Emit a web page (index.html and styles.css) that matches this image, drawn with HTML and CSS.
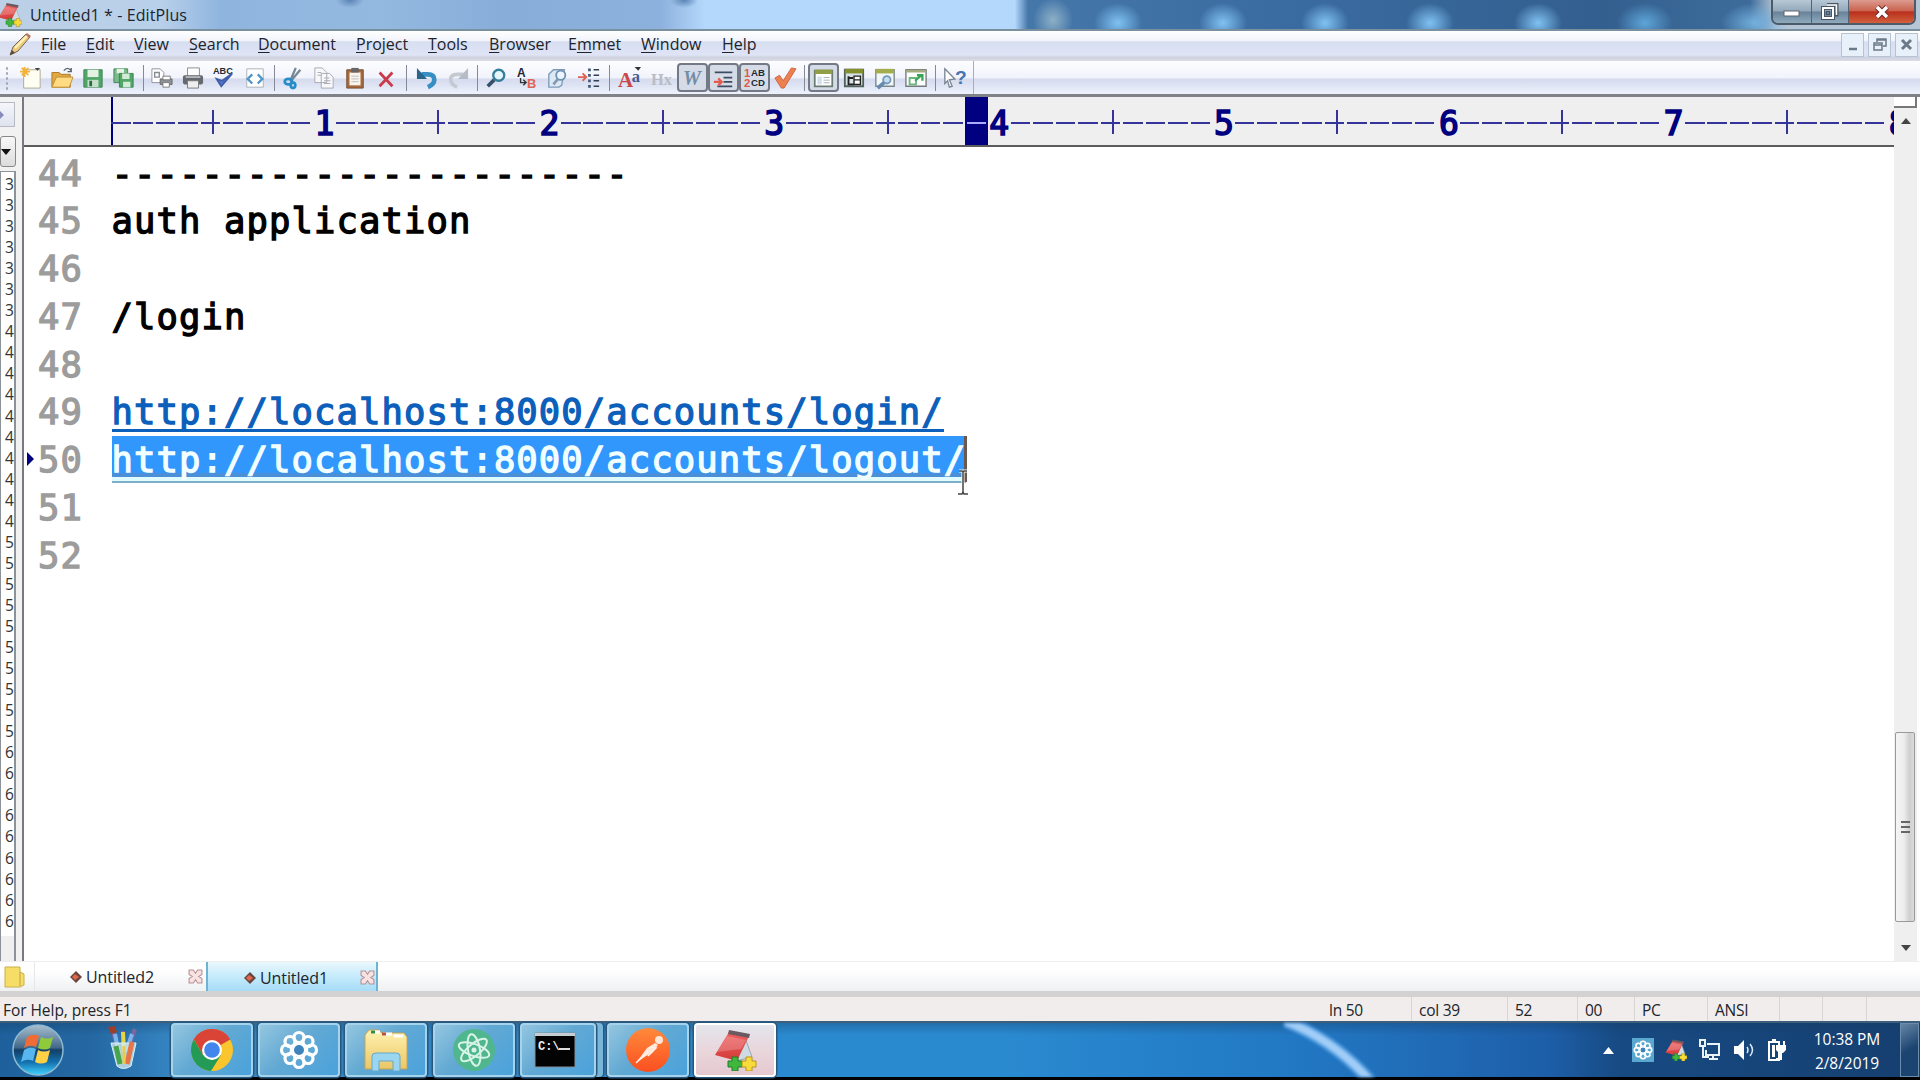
FILE: index.html
```html
<!DOCTYPE html>
<html lang="en">
<head>
<meta charset="utf-8">
<title>Untitled1 * - EditPlus</title>
<link rel="stylesheet" href="styles.css">
</head>
<body>
<svg class="defs" width="0" height="0" aria-hidden="true">
  <defs>
    <linearGradient id="red" x1="0" y1="0" x2="0" y2="1"><stop offset="0" stop-color="#f0605f"/><stop offset="1" stop-color="#d33a3a"/></linearGradient>
    <linearGradient id="orb" x1="0" y1="0" x2="0" y2="1"><stop offset="0" stop-color="#a9c0d0"/><stop offset=".45" stop-color="#42698a"/><stop offset=".5" stop-color="#123f66"/><stop offset=".75" stop-color="#1573b0"/><stop offset="1" stop-color="#40d4ff"/></linearGradient>
    <linearGradient id="orange" x1="0" y1="0" x2="0" y2="1"><stop offset="0" stop-color="#ff8a3c"/><stop offset="1" stop-color="#fb4f20"/></linearGradient>
    <linearGradient id="fold" x1="0" y1="0" x2="0" y2="1"><stop offset="0" stop-color="#fff2b0"/><stop offset="1" stop-color="#eac766"/></linearGradient>
    <symbol id="editplus" viewBox="0 0 42 42">
      <path d="M30 6l8 22-16 4z" fill="#cfdbe3" stroke="#9aa9b3"/>
      <path d="M15 3l20 4-12 25L1 26z" fill="url(#red)"/><path d="M15 1l21 4-1 4-21-4z" fill="#6b5a60"/>
      <path d="M13 7l19 4-5 9-24 3z" fill="#fff" opacity=".2"/>
      <path d="M18 28h6v4h4v6h-4v4h-6v-4h-4v-6h4z" fill="#41b63d" stroke="#1f7e27"/>
      <path d="M32 28h6v4h4v6h-4v4h-6v-4h-4v-6h4z" fill="#f9dc3c" stroke="#b89416"/>
    </symbol>
    <symbol id="flower" viewBox="0 0 40 40">
      <g fill="none" stroke="#fff" stroke-width="3.2"><circle cx="20" cy="7.5" r="5"/><circle cx="29" cy="11.500" r="5"/><circle cx="32.500" cy="20" r="5"/><circle cx="29" cy="28.500" r="5"/><circle cx="20" cy="32.500" r="5"/><circle cx="11" cy="28.500" r="5"/><circle cx="7.500" cy="20" r="5"/><circle cx="11" cy="11.500" r="5"/></g>
      <circle cx="20" cy="20" r="6" fill="#3c84bb" stroke="#fff" stroke-width="2"/>
    </symbol>
    <symbol id="page" viewBox="0 0 24 24"><path d="M3 2h18v20H3z" fill="#fff" stroke="#a9aeb5"/></symbol>
    <symbol id="tabclose" viewBox="0 0 14 14"><path d="M1 1h4l2 3 2-3h4v4l-3 2 3 2v4H9l-2-3-2 3H1V9l3-2-3-2z" fill="#f8e3e3" stroke="#b88f94"/></symbol>
  </defs>
</svg>
<div class="app">
  <header class="titlebar">
    <svg class="app-icon" width="22" height="25"><use href="#editplus" width="24" height="25" x="-2"/></svg>
    <span class="title">Untitled1 * - EditPlus</span>
    <div class="winbtns">
      <span class="wb min"><svg width="18" height="14"><rect x="1" y="4" width="15" height="5" fill="#fff" stroke="#5b6672"/></svg></span>
      <span class="wb max"><svg width="18" height="18" fill="none"><path d="M6 1h10v11h-2" stroke="#4a5663" stroke-width="3"/><path d="M6 2h9.500v10" stroke="#fff" stroke-width="1.500"/><rect x="2" y="5" width="10" height="10" stroke="#4a5663" stroke-width="4"/><rect x="2" y="5" width="10" height="10" stroke="#fff" stroke-width="2"/><rect x="5.500" y="8.500" width="3" height="3" stroke="#4a5663"/></svg></span>
      <span class="wb close"><svg width="18" height="16"><path d="M4 3l10 10M14 3L4 13" stroke="#6d2a24" stroke-width="5.500"/><path d="M4 3l10 10M14 3L4 13" stroke="#fff" stroke-width="3.500"/></svg></span>
    </div>
  </header>

  <nav class="menubar">
    <svg class="pencil" width="26" height="26"><path d="M3 23l3-8L19 2l4 3L11 19z" fill="#edca7e" stroke="#776653"/><path d="M18 3l2-2 4 3-2 2z" fill="#b8746c"/><path d="M3 23l2-5 3 3z" fill="#594b3b"/><path d="M8 16L20 4" stroke="#fff3bf" stroke-width="2"/></svg>
    <div class="menus">
      <span><u>F</u>ile</span><span><u>E</u>dit</span><span><u>V</u>iew</span><span><u>S</u>earch</span><span><u>D</u>ocument</span><span><u>P</u>roject</span><span><u>T</u>ools</span><span><u>B</u>rowser</span><span>E<u>m</u>met</span><span><u>W</u>indow</span><span><u>H</u>elp</span>
    </div>
    <div class="mdi">
      <span><svg width="16" height="16"><path d="M4 12h8" stroke="#6a7a88" stroke-width="2.500"/></svg></span>
      <span><svg width="16" height="16" fill="none" stroke="#6a7a88" stroke-width="1.500"><path d="M5 5V2h9v7h-3M5 3h9"/><rect x="2" y="6" width="8" height="7"/><path d="M2 8h8"/></svg></span>
      <span><svg width="16" height="16"><path d="M3 3l9 9M12 3l-9 9" stroke="#6a7a88" stroke-width="3"/></svg></span>
    </div>
  </nav>

  <div class="toolbar">
    <div class="tools">
      <span class="grip"></span>
      <i><svg viewBox="0 0 24 24"><path d="M4 3h18v20H4z" fill="#fffef2" stroke="#aaa78f"/><path d="M5 0v11M0 5h11M2 1l7 8M9 1L2 9" stroke="#f2b13a" stroke-width="2"/><path d="M16 1h6l-3 3z" fill="#444"/></svg></i>
      <i><svg viewBox="0 0 24 24"><path d="M1 6h8l2 2h10v14H1z" fill="#e0a83f" stroke="#a8772a"/><path d="M6 11h18l-4 11H1z" fill="#ffdc84" stroke="#bd8d36"/><path d="M14 4q4-5 8 0m0-3v4h-4" fill="none" stroke="#55616d" stroke-width="1.500"/></svg></i>
      <i><svg viewBox="0 0 24 24"><path d="M2 3h20v19H2z" fill="#4fa667" stroke="#3b8453"/><path d="M6 3h12v8H6z" fill="#e5f2e3"/><path d="M6 14h12v8H6z" fill="#c5dfcb"/><path d="M8 15h3v6H8z" fill="#276d3d"/></svg></i>
      <i><svg viewBox="0 0 24 24"><path d="M1 2h15v15H1z" fill="#7bbb87" stroke="#3b8453"/><path d="M4 2h8v5H4z" fill="#e5f2e3"/><path d="M7 7h15v15H7z" fill="#4fa667" stroke="#3b8453"/><path d="M10 7h8v6h-8zM11 16h8v6h-8z" fill="#d6ead8"/></svg></i>
      <b class="sep"></b>
      <i><svg viewBox="0 0 24 24"><path d="M1 2h9l4 4v11H1z" fill="#fff" stroke="#8c9198"/><path d="M4 6h5v5H4z" fill="none" stroke="#858b93" stroke-width="1.500"/><path d="M10 13h13v6H10z" fill="#8d9198" stroke="#666"/><path d="M13 10h8v4h-8zM13 17h7v5h-7z" fill="#fff" stroke="#777"/></svg></i>
      <i><svg viewBox="0 0 24 24"><path d="M6 1h13v9H6z" fill="#fff" stroke="#888"/><rect x="1" y="9" width="22" height="10" rx="2" fill="#666a70"/><path d="M4 11h16" stroke="#b4b8bd" stroke-width="2"/><path d="M6 15h12v8H6z" fill="#eee" stroke="#777"/></svg></i>
      <i><svg viewBox="0 0 24 24"><text x="0" y="8" class="glyph" font-size="10" fill="#262b34">ABC</text><path d="M4 13l5 8L21 7l-11 8z" fill="#5876c6" stroke="#3e5ea9" stroke-width="2"/></svg></i>
      <i><svg viewBox="0 0 24 24"><use href="#page" width="24" height="24"/><path d="M9 8l-5 5 5 5M15 8l5 5-5 5" fill="none" stroke="#4e96c9" stroke-width="2.500"/></svg></i>
      <b class="sep"></b>
      <i><svg viewBox="0 0 24 24"><path d="M15 1L9 15M20 3L9 16" stroke="#768895" stroke-width="2.500"/><g fill="none" stroke="#278dc9" stroke-width="3"><ellipse cx="7" cy="16" rx="4" ry="3"/><ellipse cx="12" cy="20" rx="2.500" ry="3"/></g></svg></i>
      <i><svg viewBox="0 0 24 24" fill="#f8f8fa" stroke="#a3a7ae"><path d="M2 1h8l5 5v11H2zM9 7h9l4 4v12H9z"/><path d="M5 6h4M5 9h4M12 12h6M12 15h7M12 18h7" /></svg></i>
      <i><svg viewBox="0 0 24 24"><path d="M3 3h18v20H3z" fill="#a86a3c" stroke="#6e4a30"/><path d="M6 6h12v14H6z" fill="#f9f4ed"/><path d="M8 1h8v5H8z" fill="#666"/><path d="M8 10h8M8 13h8M8 16h8" stroke="#bbb"/></svg></i>
      <i><svg viewBox="0 0 24 24"><path d="M5 6l14 15M19 6L5 21" stroke="#c93a4b" stroke-width="3"/></svg></i>
      <b class="sep wide"></b>
      <i><svg viewBox="0 0 24 24"><path d="M6 8h7q7 0 7 6 0 5-7 8" fill="none" stroke="#378ec2" stroke-width="5"/><path d="M1 1v12h11z" fill="#27658f"/></svg></i>
      <i><svg viewBox="0 0 24 24"><path d="M18 8h-7q-7 0-7 6 0 5 7 8" fill="none" stroke="#c5cad2" stroke-width="4"/><path d="M23 1v12H12z" fill="#b6bcc5"/></svg></i>
      <b class="sep"></b>
      <i><svg viewBox="0 0 24 24"><circle cx="15" cy="9" r="6" fill="#e5f6fb" stroke="#347e9b" stroke-width="2.500"/><path d="M10 14l-7 7" stroke="#35516c" stroke-width="4"/></svg></i>
      <i><svg viewBox="0 0 24 24"><text x="1" y="11" class="glyph" font-size="13" fill="#202632">A</text><text x="12" y="23" class="glyph" font-size="14" fill="#e06455">B</text><path d="M5 12v5h5m-2-3l3 3-3 3" fill="none" stroke="#333" stroke-width="1.500"/></svg></i>
      <i><svg viewBox="0 0 24 24"><path d="M2 8l5-5h12l-3 17-3 2H2z" fill="#dce8f4" stroke="#7d9cba" stroke-width="1.500"/><circle cx="15" cy="9" r="5" fill="#edf6ff" stroke="#6f91b2" stroke-width="2"/><path d="M12 13l-5 6" stroke="#829bb3" stroke-width="3"/></svg></i>
      <i><svg viewBox="0 0 24 24"><path d="M0 11h8M5 7l4 4-4 4" stroke="#df6154" stroke-width="2" fill="none"/><path d="M17 3h6M17 9h6M17 15h6M17 21h6" stroke="#2e4055" stroke-width="1.500"/><path d="M11 3h3M11 9h3M11 15h3M11 21h3" stroke="#465b74" stroke-width="3"/></svg></i>
      <b class="sep wide"></b>
      <i><svg viewBox="0 0 24 24"><text x="-1" y="22" class="serif" font-size="23" fill="#c9494a">A</text><text x="14" y="16" class="serif" font-size="18" fill="#445c94">a</text><path d="M17 0h7l-3 4z" fill="#333"/></svg></i>
      <i><svg viewBox="0 0 24 24"><text x="1" y="20" class="serif dim" font-size="18">Hx</text></svg></i>
      <i class="on"><svg viewBox="0 0 24 24"><text x="1" y="21" class="serif ital" font-size="23">W</text></svg></i>
      <i class="on"><svg viewBox="0 0 24 24"><path d="M2 6h20M12 12h10M12 17h10M5 22h17" stroke="#3c4d63" stroke-width="2"/><path d="M1 17h7M6 13l4 4-4 4" fill="none" stroke="#e45c4e" stroke-width="2.500"/></svg></i>
      <i class="on"><svg viewBox="0 0 24 24"><text x="0" y="11" class="glyph" font-size="13" fill="#dd5a4a">1</text><text x="0" y="23" class="glyph" font-size="13" fill="#dd5a4a">2</text><text x="8" y="10" class="glyph up" font-size="11" fill="#1d2838">AB</text><text x="8" y="22" class="glyph up" font-size="11" fill="#1d2838">CD</text></svg></i>
      <i><svg viewBox="0 0 24 24"><path d="M1 12l5-3 4 6L19 1l5 1-13 21H8z" fill="#ed8050" stroke="#cf6339"/></svg></i>
      <b class="sep"></b>
      <i class="on"><svg viewBox="0 0 24 24"><path d="M2 4h20v18H2z" fill="#fff" stroke="#6d7c72" stroke-width="2"/><path d="M2 3h20v5H2z" fill="#909e45"/><path d="M5 11h5v9H5z" fill="#cfe0ef"/><path d="M12 12h7M12 15h7M12 18h7" stroke="#9aa"/></svg></i>
      <i><svg viewBox="0 0 24 24"><path d="M2 3h20v18H2z" fill="#d5e1e6" stroke="#52605c" stroke-width="2"/><path d="M2 2h20v5H2z" fill="#848f30"/><path d="M6 10v9h6M6 12h5" stroke="#222" fill="none" stroke-width="2"/><path d="M12 10h7v9h-7zM12 14h7" fill="#fff" stroke="#222" stroke-width="1.500"/></svg></i>
      <i><svg viewBox="0 0 24 24"><path d="M2 3h20v18H2z" fill="#f1f6f8" stroke="#7a888b" stroke-width="1.500"/><path d="M2 2h20v5H2z" fill="#a4ad4d"/><circle cx="14" cy="14" r="4" fill="#c4ddf1" stroke="#7499bb" stroke-width="2"/><path d="M11 17l-7 6" stroke="#6589b0" stroke-width="4"/></svg></i>
      <i><svg viewBox="0 0 24 24"><path d="M1 3h22v18H1z" fill="#fff" stroke="#727b7c" stroke-width="1.500"/><path d="M1 3h22v3H1z" fill="#a4ad80"/><path d="M5 12h7v7H5z" fill="none" stroke="#6ab77d" stroke-width="2"/><path d="M11 15l7-6m-5 0h6v6" fill="none" stroke="#39a457" stroke-width="2.500"/></svg></i>
      <b class="sep"></b>
      <i><svg viewBox="0 0 24 24"><path d="M2 2l11 11-6 1 3 7-3 1-2-7-3 3z" fill="#fff" stroke="#7b8795" stroke-width="1.500"/><text x="13" y="19" class="glyph" font-size="21" fill="#4774b0">?</text></svg></i>
      <b class="tail"></b>
    </div>
  </div>

  <main class="workspace">
    <aside class="side">
      <div class="collapse"><svg width="8" height="12"><path d="M0 2l4 4-4 4z" fill="#858bbf"/></svg></div>
      <div class="combo"><svg width="12" height="8"><path d="M0 1h10L5 7z" fill="#111"/></svg></div>
      <div class="list">
        <p>3</p><p>3</p><p>3</p><p>3</p><p>3</p><p>3</p><p>3</p>
        <p>4</p><p>4</p><p>4</p><p>4</p><p>4</p><p>4</p><p>4</p><p>4</p><p>4</p><p>4</p>
        <p>5</p><p>5</p><p>5</p><p>5</p><p>5</p><p>5</p><p>5</p><p>5</p><p>5</p><p>5</p>
        <p>6</p><p>6</p><p>6</p><p>6</p><p>6</p><p>6</p><p>6</p><p>6</p><p>6</p>
        <div class="corner"></div>
      </div>
    </aside>
    <section class="editor">
      <div class="ruler">
        <div class="origin"></div>
        <div class="decades"><span>1</span><span>2</span><span>3</span><span>4</span><span>5</span><span>6</span><span>7</span><span>8</span></div>
        <div class="colmark"></div>
      </div>
      <div class="lines">
        <div class="line"><em>44</em><code>-----------------------</code></div>
        <div class="line"><em>45</em><code>auth application</code></div>
        <div class="line"><em>46</em><code></code></div>
        <div class="line"><em>47</em><code>/login</code></div>
        <div class="line"><em>48</em><code></code></div>
        <div class="line"><em>49</em><code class="link">http://localhost:8000/accounts/login/</code></div>
        <div class="line current"><em>50</em><code class="link selected">http://localhost:8000/accounts/logout/</code><b class="caret"></b>
          <svg class="ibeam" width="12" height="27"><path d="M2 2h3l1 1 1-1h3M6 3v20M1 25h4l1-2 1 2h4" fill="none" stroke="#fff" stroke-width="3"/><path d="M2 2h3l1 1 1-1h3M6 3v20M1 25h4l1-2 1 2h4" fill="none" stroke="#444" stroke-width="1.500"/></svg></div>
        <div class="line"><em>51</em><code></code></div>
        <div class="line"><em>52</em><code></code></div>
      </div>
    </section>
    <div class="scroll">
      <div class="split"></div>
      <div class="arrow up"><svg width="10" height="6"><path d="M0 6l5-6 5 6z" fill="#444"/></svg></div>
      <div class="thumb"><svg width="9" height="12"><path d="M0 1h9M0 6h9M0 11h9" stroke="#666" stroke-width="2"/></svg></div>
      <div class="arrow"><svg width="10" height="6"><path d="M0 0h10L5 6z" fill="#444"/></svg></div>
    </div>
  </main>

  <div class="tabs">
    <div class="dirtab"><svg width="22" height="24"><path d="M1 2h15v5l4 2v11l-4 2H1z" fill="#f5dd68" stroke="#ccb04a"/><path d="M16 7v14" stroke="#c2a23d"/></svg></div>
    <div class="tab first"><svg width="12" height="12"><path d="M6 0l6 6-6 6-6-6z" fill="#6b4640"/><path d="M5 3l4 3-4 3-3-3z" fill="#e0694b"/></svg><span>Untitled2</span><svg class="x" width="15" height="15"><use href="#tabclose" width="15" height="15"/></svg></div>
    <div class="tab active"><svg width="12" height="12"><path d="M6 0l6 6-6 6-6-6z" fill="#6b4640"/><path d="M5 3l4 3-4 3-3-3z" fill="#e0694b"/></svg><span>Untitled1</span><svg class="x" width="15" height="15"><use href="#tabclose" width="15" height="15"/></svg></div>
  </div>

  <footer class="status">
    <span>For Help, press F1</span><span>ln 50</span><span>col 39</span><span>52</span><span>00</span><span>PC</span><span>ANSI</span><span></span><span></span><span></span>
  </footer>

  <div class="taskbar">
    <svg class="streak" width="120" height="54"><path d="M-4 -4Q50 16 88 60" fill="none" stroke="#4f9be0" stroke-width="13"/><path d="M-4 -4Q50 16 88 60" fill="none" stroke="#a1cdf7" stroke-width="8"/></svg>
    <div class="start"><svg width="54" height="54" viewBox="0 0 54 54"><circle cx="27" cy="27" r="25" fill="url(#orb)" stroke="#8eb9d2" stroke-width="1.500"/><path d="M16 14q6-4 12-1l-3 11q-6-3-12 1z" fill="#ef6c36"/><path d="M30 14q6 3 12 0l-3 11q-5 3-12 0z" fill="#8fca3b"/><path d="M13 27q6-4 12-1l-3 12q-6-3-12 1z" fill="#58b6ee"/><path d="M27 27q6 3 12 0l-3 12q-6 3-12 0z" fill="#fdd045"/></svg></div>
    <div class="paint"><svg width="32" height="44" viewBox="0 0 32 44"><path d="M5 2l5 18M16 5v18M28 3l-8 22" stroke="#7b66a0" stroke-width="4"/><path d="M8 8l4 20M25 8l-6 18" stroke="#7eb2ec" stroke-width="4"/><path d="M16 6l1 20" stroke="#e7d548" stroke-width="4"/><path d="M1 1l7-1 2 6-6 2z" fill="#9d3e2b"/><path d="M4 17h25l-5 23q-8 5-14 0z" fill="#d8ecef" fill-opacity=".75" stroke="#d6f2fa"/><path d="M9 20l4 18" stroke="#47a448" stroke-width="5"/><path d="M25 16l-5 22" stroke="#e67548" stroke-width="5"/><path d="M17 20v18" stroke="#e8cd48" stroke-width="3"/></svg></div>
    <div class="task"><svg width="44" height="44" viewBox="0 0 44 44"><circle cx="22" cy="22" r="21" fill="#fbc52d"/><path d="M22 22L3.800 11.500A21 21 0 0 1 40.200 11.500z" fill="#da4437"/><path d="M22 11.500h18.200A21 21 0 0 0 3.800 11.500L13 27z" fill="#da4437"/><path d="M3.800 11.500A21 21 0 0 0 21 43l10-16-9 5-9-5z" fill="#239b57"/><circle cx="22" cy="22" r="10" fill="#fff"/><circle cx="22" cy="22" r="7.800" fill="#4285ed"/></svg></div>
    <div class="task"><svg width="40" height="40"><use href="#flower" width="40" height="40"/></svg></div>
    <div class="task"><svg width="46" height="44" viewBox="0 0 46 44"><path d="M2 7l4-5h9l4 3h22l3 4v32H2z" fill="url(#fold)" stroke="#c7a557"/><path d="M8 4h9M20 6h9M31 8h9" stroke="#fff" stroke-width="3"/><path d="M8 4h4" stroke="#338c45" stroke-width="3"/><path d="M19 6h4" stroke="#b55342" stroke-width="3"/><path d="M9 43V28q0-3 4-3h20q4 0 4 3v15h-7V33H16v10z" fill="#9bd6f1" stroke="#65a9cb"/></svg></div>
    <div class="task"><svg width="44" height="44" viewBox="0 0 44 44"><circle cx="22" cy="22" r="21" fill="#50b68d"/><g fill="none" stroke="#d8f4e7" stroke-width="2"><ellipse cx="22" cy="22" rx="16" ry="6" transform="rotate(20 22 22)"/><ellipse cx="22" cy="22" rx="16" ry="6" transform="rotate(80 22 22)"/><ellipse cx="22" cy="22" rx="16" ry="6" transform="rotate(140 22 22)"/></g><circle cx="22" cy="22" r="2.500" fill="#d8f4e7"/></svg></div>
    <div class="task cmd"><svg width="42" height="36"><path d="M1 1h40v34H1z" fill="#030303" stroke="#81909b"/><path d="M1 1h40v3H1z" fill="#c5cdd2"/><text x="4" y="18" class="term" font-size="12">C:\</text><path d="M25 17h11" stroke="#ddd" stroke-width="2"/></svg></div>
    <div class="task"><svg width="46" height="46" viewBox="0 0 46 46"><circle cx="23" cy="23" r="22" fill="url(#orange)"/><circle cx="34" cy="13" r="4" fill="#ffe6d5"/><path d="M11 36l11-15 8-5 3 2-6 8-6 3z" fill="#ffe6d5"/><path d="M11 36l12-12M25 20l6 1-8 8" fill="none" stroke="#fff1e8" stroke-width="1.500"/></svg></div>
    <div class="task lit"><svg width="44" height="42"><use href="#editplus" width="44" height="42"/></svg></div>
    <div class="tray">
      <i class="tri"><svg width="11" height="7"><path d="M0 7l5.500-7L11 7z" fill="#fff"/></svg></i>
      <i><svg width="22" height="24"><rect width="22" height="24" fill="#5aa7cf"/><use href="#flower" x="1" y="2" width="20" height="20"/></svg></i>
      <i><svg width="22" height="22"><use href="#editplus" width="22" height="22"/></svg></i>
      <i><svg width="22" height="22" fill="none" stroke="#eaf2f7" stroke-width="2"><path d="M8 5h12v11H7v-5M10 20h9M14 16v4"/><path d="M1 1h5v6H1zM4 7v11h6"/></svg></i>
      <i><svg width="22" height="22"><path d="M1 7h4l6-6v20l-6-6H1z" fill="#fff"/><path d="M14 8q2 3 0 6M17 5q5 6 0 12" fill="none" stroke="#dbe9f2" stroke-width="1.500"/></svg></i>
      <i><svg width="22" height="22"><path d="M3 3h10v18H3z" fill="none" stroke="#fff" stroke-width="2"/><path d="M6 0h4v3H6zM6 6h3v12H6zM10 6h10v5l-3 3h-4l-3-3zM12 2h2v4h-2zM17 2h2v4h-2z" fill="#fff"/><path d="M15 13v7h-5" fill="none" stroke="#fff" stroke-width="2"/></svg></i>
    </div>
    <div class="clock"><span>10:38 PM</span><span>2/8/2019</span></div>
    <div class="desk"></div>
  </div>
</div>
</body>
</html>
```
FILE: styles.css
```css
* { box-sizing: border-box; }
body { margin: 0; background: #000; font-family: "Open Sans", "Noto Sans", sans-serif; font-size: 16px; color: #20242c; overflow: hidden; }
p { margin: 0; }
svg { display: block; flex: none; }
.defs { position: absolute; }
.app { width: 1920px; height: 1080px; display: flex; flex-direction: column; }
.app > * { flex: none; }

.titlebar {
  height: 31px; display: flex; align-items: flex-start; border-bottom: 2px solid #7b909f;
  background:
    radial-gradient(ellipse 24px 20px at 1118px 23px, #80c2f2, transparent),
    radial-gradient(ellipse 24px 20px at 1223px 23px, #80c2f2, transparent),
    radial-gradient(ellipse 24px 20px at 1325px 23px, #80c2f2, transparent),
    radial-gradient(ellipse 24px 20px at 1430px 23px, #80c2f2, transparent),
    radial-gradient(ellipse 24px 20px at 1538px 23px, #80c2f2, transparent),
    radial-gradient(ellipse 28px 20px at 1645px 23px, #5ea5d8, transparent),
    radial-gradient(ellipse 34px 20px at 1755px 23px, #74b0dd, transparent),
    radial-gradient(ellipse 20px 22px at 1053px 20px, #8eb0c8, transparent),
    radial-gradient(ellipse 14px 8px at 350px 0, #5b84b5, transparent),
    radial-gradient(ellipse 14px 8px at 684px 0, #5b84b5, transparent),
    linear-gradient(90deg, #bcd0e6 0, #b9d0ea 160px, #8fb5df 220px, #94b9e0 380px, #88add9 500px, #8cb1dc 660px, #b4d7fc 705px, #b4d7fc 1015px, #4577a9 1028px, #3a6ba0 1300px, #335f8f 1600px, #3d6c9a 1750px, #b5c6d6 1775px);
}
.app-icon { margin-top: 2px; }
.title { margin-left: 8px; line-height: 31px; width: 170px; white-space: nowrap; letter-spacing: .1px; }
.winbtns { margin: 0 4px 0 auto; width: 145px; height: 25px; display: flex; border: 2px solid #4d5b69; border-top: 0; border-radius: 0 0 7px 7px; overflow: hidden; }
.wb { display: flex; align-items: center; justify-content: center; background: linear-gradient(#b7c8d6, #93a8ba 48%, #68829a 52%, #8faabd); border-right: 1px solid #526372; }
.min { width: 39px; padding-top: 4px; } .max { width: 37px; }
.close { flex: 1; border: 0; background: linear-gradient(#dc9b8f, #cb6450 46%, #b92f1c 52%, #d2603d); }

.menubar { height: 30px; display: flex; align-items: center; background: linear-gradient(#fff, #f2f4fb 32%, #d7def0 36%, #dfe5f5 80%, #cfd2df 88%, #dadce6); }
.pencil { margin: 0 0 2px 7px; width: 26px; }
.menus { margin: 0 0 3px 8px; display: grid; grid-template-columns: 45px 48px 55px 69px 98px 72px 61px 79px 73px 81px 60px; line-height: 27px; }
.menus u { text-underline-offset: 2px; }
.mdi { margin: 0 2px 3px auto; display: flex; gap: 4px; }
.mdi span { width: 23px; height: 24px; display: flex; align-items: center; justify-content: center; background: #e8f1fa; border: 1px solid #b5c3d2; }

.toolbar { height: 36px; border-bottom: 3px solid #808287; background: linear-gradient(#fdfdff, #f2f4fc 50%, #d6dcee 55%, #dbe1f2 68%, #eef2fc); }
.tools { display: flex; align-items: center; height: 33px; }
.grip { width: 15.5px; height: 24px; background: radial-gradient(circle, #a5a8b5 1px, transparent 1.5px) 4px 0 / 6px 5px repeat-y; }
.tools i { width: 31px; height: 29px; display: flex; align-items: center; justify-content: center; }
.tools i svg { width: 22px; height: 22px; overflow: visible; }
.tools .on { background: #d5dce8; border: 2px solid #747a85; border-radius: 4px; }
.tools .on svg { width: 21px; height: 21px; }
.sep { width: 7px; height: 26px; background: linear-gradient(#868a96, #868a96) center / 1px 100% no-repeat; }
.sep.wide { width: 10px; }
.tail { width: 1px; height: 33px; background: #a9adba; margin-left: 3px; }
.glyph { font-family: "Liberation Sans", sans-serif; font-weight: 700; font-style: normal; }
.serif { font-family: "Liberation Serif", serif; font-weight: 700; font-style: normal; }
.dim { fill: #b9bcc4; } .serif.ital { font-style: italic; fill: #748da6; }
.term { font-family: "Liberation Mono", monospace; font-weight: 700; fill: #eee; }

.workspace { height: 864px; display: flex; background: #fff; }
.side { width: 24px; background: #f2f2f2; border-right: 2px solid #777b81; }
.collapse { margin-top: 5px; width: 15px; height: 25px; display: flex; align-items: center; background: linear-gradient(#f5f6fb, #dfe3ef); border: 1px solid #b8bbc4; border-left: 0; }
.combo { margin-top: 9px; width: 16px; height: 31px; display: flex; align-items: center; background: linear-gradient(#f8f8f8, #dcdcdc); border: 1px solid #888; border-radius: 3px; }
.list { margin-top: 4px; width: 16px; height: 790px; padding-top: 2px; border: 1px solid #8b9299; border-width: 1px 2px 1px 1px; background: #fff; }
.list p { height: 21.05px; line-height: 21px; font-size: 15.500px; padding-left: 4px; color: #333; }
.corner { width: 13px; height: 25px; margin-top: 4px; background: #efefef; }

.editor { width: 1870px; overflow: hidden; }
.ruler { height: 50px; background: #efefef; border-bottom: 2px solid #5c5c5c; display: flex; position: relative; overflow: hidden; }
.origin { width: 87px; flex: none; }
.decades { display: flex; border-left: 2px solid #000080; }
.decades span {
  flex: none; width: 224.9px; height: 48px; display: flex; justify-content: flex-end; font: 33px/53px "DejaVu Sans Mono", monospace; color: #000080; -webkit-text-stroke: 1.600px #000080;
  padding-right: 1.500px;
  background:
    linear-gradient(#34349a, #34349a) 101px 13px / 2px 24px no-repeat,
    linear-gradient(#efefef, #efefef) 202px 0 / 24px 48px no-repeat,
    repeating-linear-gradient(90deg, #34349a 0 19.500px, transparent 19.500px 22.490px) 0 25px / 100% 2px no-repeat;
}
.decades span:first-child { margin-left: -2px; }
.colmark { position: absolute; left: 941px; top: 0; width: 23px; height: 48px; background: linear-gradient(#aaaaff, #aaaaff) center 25px / 19px 2px no-repeat #000080; }

.lines { padding-top: 2.500px; }
.line { height: 47.8px; display: flex; position: relative; font: 35.5px/47.8px "DejaVu Sans Mono", monospace; white-space: pre; }
.line em { width: 87.5px; padding-left: 14px; font-style: normal; letter-spacing: 1.1px; color: #9c9c9c; -webkit-text-stroke: 1.3px #9c9c9c; }
.line code { font: inherit; letter-spacing: 1.12px; color: #000; -webkit-text-stroke: 1.3px currentColor; }
.line code.link { color: #0c5fba; height: 46px; background: linear-gradient(#0c5fba, #0c5fba) 0 41px / 100% 3px no-repeat; }
.line code.selected { color: #f2ffff; height: 47px; background: linear-gradient(#e0fbff, #e0fbff) 0 41px / 100% 4px no-repeat, linear-gradient(#3297fd 36px, #4b8fd6 38px 45px, #7dafc9 45px); }
.current::before { content: ""; position: absolute; left: 3px; top: 16px; border: 7px solid transparent; border-left-color: #000080; border-right: 0; }
.caret { width: 3px; height: 46px; background: #69594f; margin-left: -2px; }
.ibeam { position: absolute; left: 933px; top: 33px; }

.scroll { width: 26px; background: linear-gradient(90deg, #efefef 23px, #fff 23px); display: flex; flex-direction: column; }
.split { height: 11px; width: 23px; border: 2px solid #777; border-width: 0 2px 2px 0; background: #fff; }
.arrow { height: 25px; width: 24px; display: flex; align-items: center; justify-content: center; }
.thumb { margin: 599px 0 0 1px; width: 20px; height: 190px; display: flex; align-items: center; justify-content: center; border: 1px solid #9a9a9a; border-radius: 2px; background: linear-gradient(90deg, #f5f5f5, #ececec 45%, #cfcfcf 75%, #dcdcdc); }
.thumb + .arrow { height: 37px; padding-top: 14px; }

.tabs { height: 36px; display: flex; border-top: 1px solid #eee; border-bottom: 6px solid #d3d1d2; background: linear-gradient(#fff 30%, #eef1f2); }
.dirtab { width: 35px; padding: 3px 0 0 4px; border-right: 1px solid #e5e7e8; }
.tab { display: flex; align-items: center; }
.tab span { margin-left: 4px; width: 70px; letter-spacing: -.1px; }
.tab .x { margin-left: auto; }
.first { width: 171px; padding: 0 3px 0 35px; }
.active { width: 172px; padding: 2px 1px 0 36px; background: linear-gradient(#eaf8fe, #c8ecfc 45%, #a7dcf7); border: 2px solid #6eb3d1; border-width: 0 2px; }

.status { height: 24px; background: #f0edec; display: grid; grid-template-columns: 1322px 90px 96px 70px 57px 73px 72px 43px 44px 1fr; line-height: 26px; font-size: 15.500px; letter-spacing: -.25px; }
.status span { padding-left: 7px; border-right: 1px solid #d8d5d4; white-space: nowrap; overflow: hidden; }
.status span:first-child { padding-left: 3px; border: 0; letter-spacing: -.05px; }
.status span:last-child { border: 0; }

.taskbar {
  height: 56px; display: flex; align-items: stretch; position: relative; border-top: 2px solid #3d5f7c;
  background: linear-gradient(rgba(20,60,100,.35), transparent 12px), linear-gradient(90deg, #1d609b 0, #2467a1 90px, #3484c1 170px, #3184c2 600px, #2a8ad0 800px, #2a8ad0 1000px, #2279c4 1280px, #2069b4 1450px, #1d5ea8 1550px, #174a82 1620px, #163f70 1920px);
}
.streak { position: absolute; left: 1284px; top: 0; filter: blur(1.500px); }
.start { width: 76px; padding: 0 0 0 11px; }
.paint { width: 95px; padding: 3px 0 0 31px; }
.task {
  width: 82px; margin-right: 5.2px; display: flex; align-items: center; justify-content: center; border: 2px solid #a5d3ec; border-radius: 4px; box-shadow: 0 0 0 1.500px #27577d;
  background: linear-gradient(135deg, #94c6e0, #62a9d3 45%, #4aa2dc);
}
.cmd { width: 76px; padding-right: 6px; margin-right: 11.200px; box-shadow: 0 0 0 1.500px #27577d, 7px 0 0 0 #79b7da, 8.500px 0 0 0 #27577d; }
.lit { border-color: #fff; background: linear-gradient(#e4e5ed, #e9d5da 55%, #e4c9cf); margin-right: 0; }
.tray { margin-left: auto; display: flex; align-items: center; }
.tray i { width: 33.600px; display: flex; justify-content: center; }
.tray .tri { width: 36px; }
.clock { width: 106px; padding: 4px 0 0; display: flex; flex-direction: column; align-items: center; line-height: 24px; font-size: 15.500px; color: #fff; letter-spacing: -.05px; white-space: nowrap; }
.desk { width: 19px; margin-right: 1px; border: 1px solid #6b8cac; background: linear-gradient(150deg, #6585a5, #1c4471 50%); }
```
